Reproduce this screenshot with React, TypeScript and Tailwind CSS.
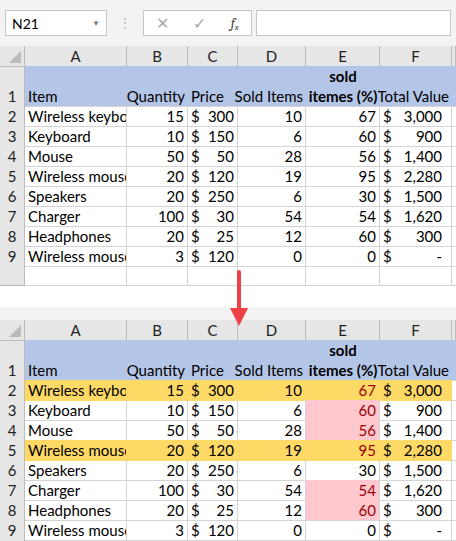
const rows: [string, string, string, string, string, string, string][] = [
  ["2", "Wireless keyboa", "15", "300", "10", "67", "3,000"],
  ["3", "Keyboard", "10", "150", "6", "60", "900"],
  ["4", "Mouse", "50", "50", "28", "56", "1,400"],
  ["5", "Wireless mouse", "20", "120", "19", "95", "2,280"],
  ["6", "Speakers", "20", "250", "6", "30", "1,500"],
  ["7", "Charger", "100", "30", "54", "54", "1,620"],
  ["8", "Headphones", "20", "25", "12", "60", "300"],
  ["9", "Wireless mouse", "3", "120", "0", "0", "-"],
];

const cols = "grid grid-cols-[25px_102px_61px_50px_68px_74px_72px_1fr]";
const cell = "border-r border-b border-[#d4d4d4] overflow-hidden whitespace-nowrap px-[3px]";
const hdr = "border-r border-b border-[#bcbcbc] bg-[#e6e6e6] text-center text-[#222]";
const head = "bg-[#b4c6e7] flex items-end px-[3px] border-b border-[#d4d4d4] whitespace-nowrap";

function Sheet({ formatted }: { formatted: boolean }) {
  return (
    <div className="text-[15px] leading-[20px]">
      <div className={`${cols} h-[20px]`}>
        <div className={`${hdr} relative`}>
          <div className="absolute right-[3px] bottom-[3px] w-0 h-0 border-l-[12px] border-l-transparent border-b-[12px] border-b-[#bbb]" />
        </div>
        {["A", "B", "C", "D", "E", "F"].map((c) => (
          <div key={c} className={hdr}>{c}</div>
        ))}
        <div className={hdr} />
      </div>
      <div className={`${cols} h-[40px]`}>
        <div className={`${hdr} flex items-end justify-center`}>1</div>
        <div className={head}>Item</div>
        <div className={`${head} justify-end`}>Quantity</div>
        <div className={head}>Price</div>
        <div className={`${head} justify-end`}>Sold Items</div>
        <div className="bg-[#b4c6e7] flex flex-col items-center justify-end font-bold border-b border-[#d4d4d4] whitespace-nowrap"><span>sold</span><span>itemes (%)</span></div>
        <div className={`${head} justify-end`}>Total Value</div>
        <div className="bg-[#b4c6e7] border-b border-[#d4d4d4]" />
      </div>
      {rows.map((r) => {
        const yellow = formatted && (r[0] === "2" || r[0] === "5");
        const red = formatted && Number(r[5]) >= 54;
        const pink = red && !yellow;
        const bg = yellow ? "bg-[#ffd966] border-[#ffd966]" : "";
        return (
          <div key={r[0]} className={`${cols} h-[20px]`}>
            <div className={hdr}>{r[0]}</div>
            <div className={`${cell} ${bg}`}>{r[1]}</div>
            <div className={`${cell} ${bg} text-right`}>{r[2]}</div>
            <div className={`${cell} ${bg} flex justify-between`}><span>$</span><span>{r[3]}</span></div>
            <div className={`${cell} ${bg} text-right`}>{r[4]}</div>
            <div className={`${cell} ${bg} ${pink ? "bg-[#ffc7ce]" : ""} ${red ? "text-[#9c0006]" : ""} text-right`}>{r[5]}</div>
            <div className={`${cell} ${bg} flex justify-between`}><span>$</span><span className="pr-[6px]">{r[6]}</span></div>
            <div className={cell} />
          </div>
        );
      })}
      <div className={`${cols} h-[20px]`}>
        <div className={hdr} />
        {[0, 1, 2, 3, 4, 5, 6].map((i) => (
          <div key={i} className={cell} />
        ))}
      </div>
    </div>
  );
}

export default function App() {
  return (
    <div className="relative w-[456px] h-[541px] overflow-hidden bg-white text-black" style={{ fontFamily: 'Lato, "Liberation Sans", sans-serif' }}>
      <div className="bg-[#f3f3f3] h-[46px] flex items-start pt-[10px] px-[5px] gap-[4px] text-[14px]">
        <div className="w-[102px] h-[26px] bg-white border border-[#c6c6c6] flex items-center justify-between px-[6px]">
          <span>N21</span>
          <span className="text-[8px] text-[#777]">▼</span>
        </div>
        <div className="w-[28px] text-center text-[#bbb] leading-[26px]">⋮</div>
        <div className="w-[109px] h-[26px] bg-white border border-[#c6c6c6] flex items-center justify-around text-[#aaa]">
          <span className="text-[16px]">✕</span>
          <span className="text-[16px]">✓</span>
          <span className="italic font-serif text-[#444] text-[14px]">f<sub className="text-[9px]">x</sub></span>
        </div>
        <div className="flex-1 h-[26px] bg-white border border-[#c6c6c6]" />
      </div>
      <Sheet formatted={false} />
      <div className="h-[21px] bg-white" />
      <div className="h-[13px] bg-[#f3f3f3]" />
      <Sheet formatted={true} />
      <svg className="absolute left-[229px] top-[270px]" width="20" height="58" viewBox="0 0 20 58">
        <line x1="10" y1="2" x2="10" y2="42" stroke="#ef4147" strokeWidth="4" strokeLinecap="round" />
        <polygon points="1,38 19,38 10,56" fill="#ef4147" />
      </svg>
    </div>
  );
}
